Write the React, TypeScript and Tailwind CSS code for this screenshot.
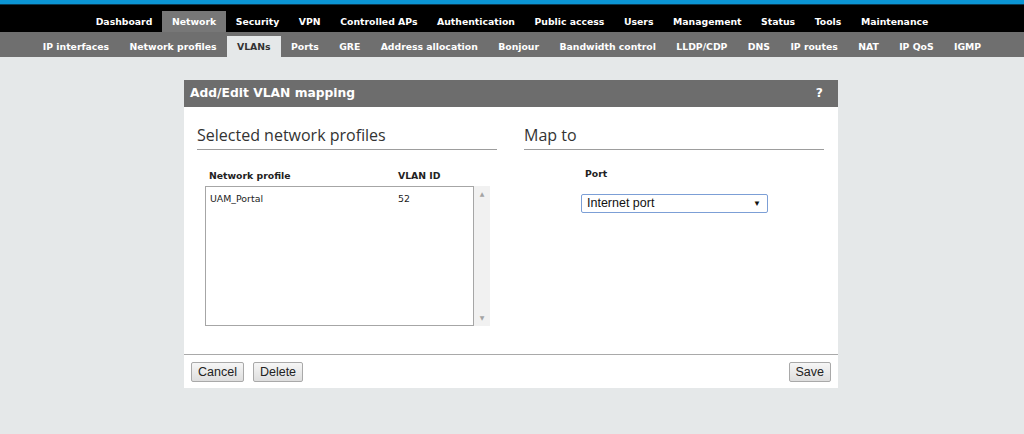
const topNav = [
  "Dashboard",
  "Network",
  "Security",
  "VPN",
  "Controlled APs",
  "Authentication",
  "Public access",
  "Users",
  "Management",
  "Status",
  "Tools",
  "Maintenance",
];

const subNav = [
  "IP interfaces",
  "Network profiles",
  "VLANs",
  "Ports",
  "GRE",
  "Address allocation",
  "Bonjour",
  "Bandwidth control",
  "LLDP/CDP",
  "DNS",
  "IP routes",
  "NAT",
  "IP QoS",
  "IGMP",
];

function Button({ label }: { label: string }) {
  return (
    <button className="h-[20px] rounded-[2px] border border-[#a9a9a9] bg-gradient-to-b from-[#f6f6f6] to-[#dedede] px-[6px] font-['Liberation_Sans',Arial,sans-serif] text-[12.5px] leading-[18px] text-[#222]">
      {label}
    </button>
  );
}

export default function App() {
  return (
    <div className="min-h-[434px] bg-[#e5e8e9] font-['DejaVu_Sans',Verdana,sans-serif]">
      <div className="h-[4px] bg-[#0b95d4]" />
      <div className="h-[1px] bg-[#0a3a52]" />

      <nav className="flex h-[27px] items-end justify-center bg-black">
        {topNav.map((item) => (
          <div
            key={item}
            className={
              item === "Network"
                ? "flex h-[21px] items-center bg-[#777] px-[9.8px] text-[9.3px] font-bold text-white"
                : "flex h-[21px] items-center px-[9.8px] text-[9.3px] font-bold text-white"
            }
          >
            {item}
          </div>
        ))}
      </nav>

      <nav className="flex h-[25px] items-end justify-center bg-[#6f6f6f]">
        {subNav.map((item) => (
          <div
            key={item}
            className={
              item === "VLANs"
                ? "flex h-[21px] items-center bg-[#e5e8e9] px-[10.2px] text-[9.3px] font-bold text-[#333]"
                : "flex h-[21px] items-center px-[10.2px] text-[9.3px] font-bold text-white"
            }
          >
            {item}
          </div>
        ))}
      </nav>

      <div className="ml-[184px] mt-[23px] w-[654px] bg-white">
        <div className="flex h-[27px] items-center justify-between bg-[#6d6d6d] pl-[6px] pr-[15px] text-[12.3px] font-bold text-white">
          <span>Add/Edit VLAN mapping</span>
          <span>?</span>
        </div>

        <div className="flex gap-[27px] pl-[13px] pr-[14px] pt-[15px]">
          <section className="w-[300px]">
            <h2 className="border-b border-[#9d9d9d] font-['Open_Sans',sans-serif] text-[16px] leading-[27px] text-[#333]">
              Selected network profiles
            </h2>
            <div className="mt-[20px] flex pl-[12px] text-[9.3px] font-bold leading-[12px] text-[#222]">
              <span className="w-[189px]">Network profile</span>
              <span>VLAN ID</span>
            </div>
            <div className="ml-[8px] mt-[4px] flex h-[140px]">
              <div className="w-[269px] border border-[#a6a6a6] pt-[5px] text-[9.4px] text-[#222]">
                <div className="flex pl-[4px]">
                  <span className="w-[188px]">UAM_Portal</span>
                  <span>52</span>
                </div>
              </div>
              <div className="flex w-[16px] flex-col items-center justify-between bg-[#f1f1f1] py-[4px] text-[6px] leading-[8px] text-[#a3a3a3]">
                <span>▲</span>
                <span>▼</span>
              </div>
            </div>
          </section>

          <section className="w-[300px]">
            <h2 className="border-b border-[#9d9d9d] font-['Open_Sans',sans-serif] text-[16px] leading-[27px] text-[#333]">
              Map to
            </h2>
            <div className="mt-[18px] pl-[61px] text-[9.3px] font-bold leading-[12px] text-[#222]">
              Port
            </div>
            <div className="ml-[57px] mt-[14px] flex h-[19px] w-[187px] items-center justify-between rounded-[2px] border border-[#7c9fd6] pl-[5px] pr-[6px] font-['Liberation_Sans',Arial,sans-serif] text-[12.5px] text-[#111]">
              <span>Internet port</span>
              <span className="text-[8px]">▼</span>
            </div>
          </section>
        </div>

        <div className="mt-[28px] flex justify-between border-t border-[#a9a9a9] px-[7px] pb-[6px] pt-[7px]">
          <div className="flex gap-[9px]">
            <Button label="Cancel" />
            <Button label="Delete" />
          </div>
          <Button label="Save" />
        </div>
      </div>
    </div>
  );
}
